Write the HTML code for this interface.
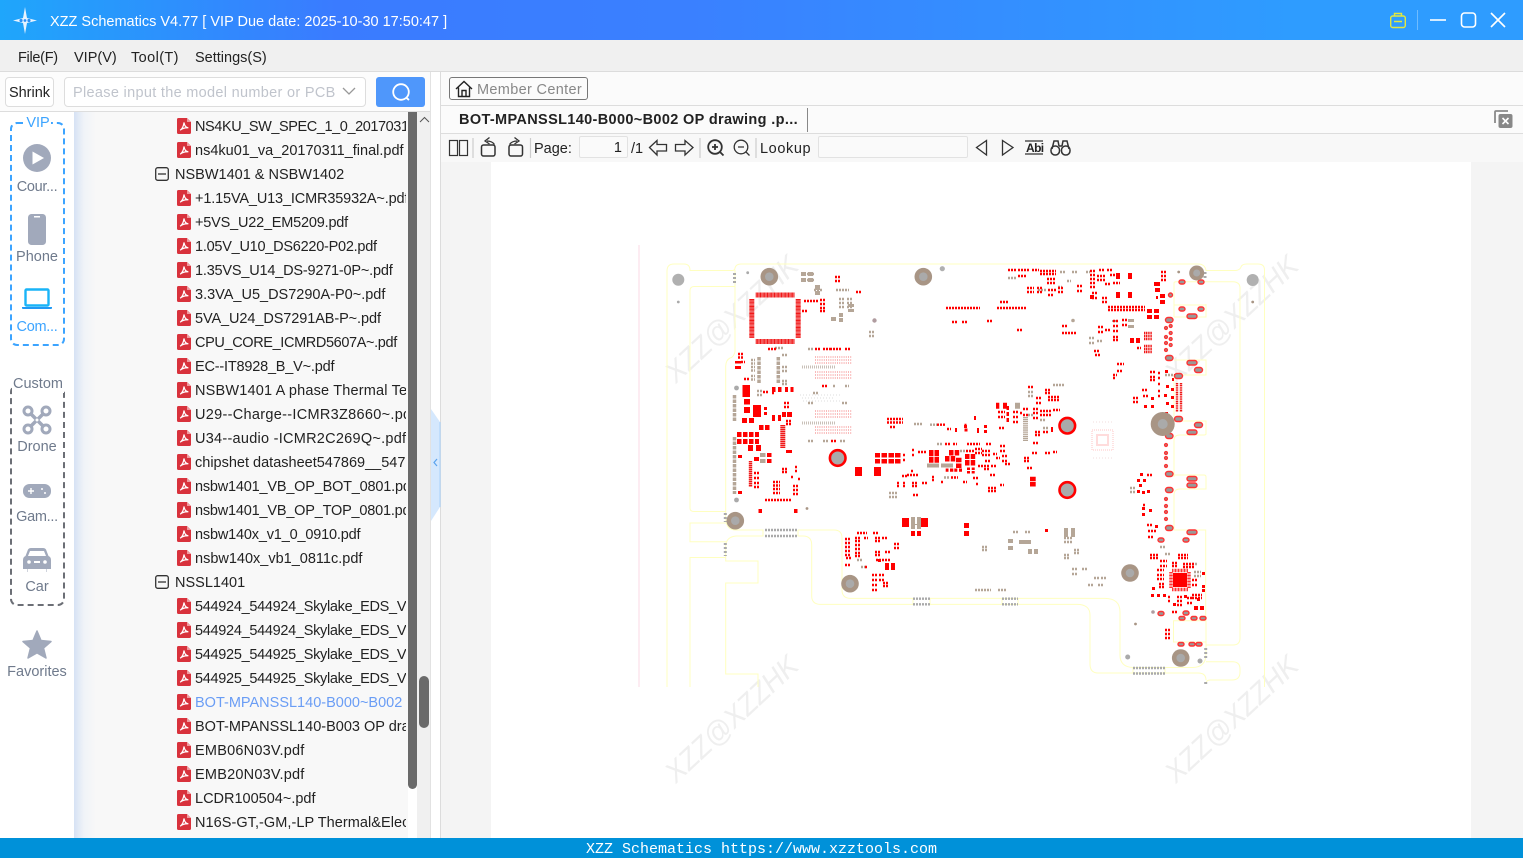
<!DOCTYPE html>
<html><head><meta charset="utf-8"><title>XZZ Schematics</title>
<style>
*{box-sizing:border-box}
html,body{margin:0;padding:0;width:1523px;height:858px;overflow:hidden;background:#fff;font-family:"Liberation Sans","Noto Sans CJK SC",sans-serif;color:#222}
.a{position:absolute;white-space:nowrap}
#title{left:0;top:0;width:1523px;height:40px;background:linear-gradient(90deg,#1fa6fb 0,#3a7bff 22%,#3a80ff 45%,#2e9cff 85%)}
#menu{left:0;top:40px;width:1523px;height:32px;background:#f0f0f0;border-bottom:1px solid #dcdcdc}
.m{top:49px;font-size:14.5px;line-height:18px;color:#222}
.n{left:0;width:74px;text-align:center;font-size:14.5px;line-height:18px;color:#6f7a8c;margin-top:1px}
#tree{left:74px;top:112px;width:334px;height:726px;background:linear-gradient(90deg,#d6e2f4 0,#f0f3f8 10px,#f8f8f8 22px);overflow:hidden}
.t{left:121px;width:211px;height:24px;line-height:24px;font-size:14.5px;color:#222;overflow:hidden;margin-top:1px}
svg{position:absolute;overflow:visible}
.s{stroke:#333;stroke-width:1.3;fill:none}
</style></head><body>
<svg width="0" height="0" style="position:absolute"><defs>
<g id="pdf"><path d="M0 1.5Q0 0 1.5 0H10L14 4V14.5Q14 16 12.5 16H1.5Q0 16 0 14.5Z" fill="#d8323c"/><path d="M10 0V4H14Z" fill="#f09a9f"/><path d="M3.2 12.2C5 11 6.5 8.5 7 4.5 7.5 8 9 9.6 11.4 9.8 8.5 9.6 5.5 10.2 3.2 12.2Z" fill="none" stroke="#fff" stroke-width="1.2"/></g>
</defs></svg>

<div class="a" id="title"></div>
<svg style="left:12px;top:7px" width="26" height="27" viewBox="0 0 26 27"><path d="M13 0L15 11 25 13.5 15 16 13 27 11 16 1 13.5 11 11Z" fill="#e7f3ff"/><circle cx="9" cy="13.5" r="1.6" fill="#2c90f6"/><circle cx="17" cy="13.5" r="1.6" fill="#2c90f6"/><circle cx="13" cy="13.5" r="1.4" fill="#2c90f6"/></svg>
<div class="a" style="left:50px;top:12px;font-size:14.5px;line-height:20px;color:#fff">XZZ Schematics V4.77 [ VIP Due date: 2025-10-30 17:50:47 ]</div>
<svg style="left:1390px;top:12px" width="16" height="17" viewBox="0 0 16 17" fill="none" stroke="#e2e83f" stroke-width="1.4"><rect x=".7" y="4" width="14.6" height="11.5" rx="2"/><path d="M4.5 4V1.5H11.500V4M4 9.500H12"/></svg>
<div class="a" style="left:1417px;top:10px;width:1px;height:20px;background:#6fbcff"></div>
<svg style="left:1428px;top:10px" width="80" height="20" viewBox="0 0 80 20" fill="none" stroke="#fff" stroke-width="1.6"><path d="M2 10H18"/><rect x="33.500" y="3" width="14" height="14" rx="3"/><path d="M63 3L77 17M77 3L63 17"/></svg>

<div class="a" id="menu"></div>
<div class="a m" style="left:18px;letter-spacing:-.3px">File(F)</div>
<div class="a m" style="left:74px">VIP(V)</div>
<div class="a m" style="left:131px;letter-spacing:.4px">Tool(T)</div>
<div class="a m" style="left:195px">Settings(S)</div>

<div class="a" style="left:0;top:72px;width:430px;height:40px;background:#fcfcfc;border-bottom:1px solid #ddd"></div>
<div class="a" style="left:5px;top:77px;width:49px;height:30px;border:1px solid #ddd;border-radius:4px;background:#fff;font-size:14.5px;line-height:30px;text-align:center;color:#222">Shrink</div>
<div class="a" style="left:64px;top:77px;width:302px;height:30px;border:1px solid #ddd;border-radius:4px;background:#fff;font-size:14.5px;line-height:30px;padding-left:8px;color:#c0c4cc;letter-spacing:.31px">Please input the model number or PCB</div>
<svg style="left:342px;top:87px" width="14" height="9" viewBox="0 0 14 9" fill="none" stroke="#999" stroke-width="1.3"><path d="M1 1L7 7 13 1"/></svg>
<div class="a" style="left:376px;top:77px;width:49px;height:30px;border-radius:3px;background:#4f97fb"></div>
<svg style="left:391px;top:82px" width="20" height="20" viewBox="0 0 20 20" fill="none" stroke="#fff" stroke-width="1.8"><circle cx="10" cy="10" r="7.800"/><path d="M15 15.500L18 18"/></svg>

<!-- left nav -->
<div class="a" style="left:0;top:112px;width:74px;height:726px;background:#fff"></div>
<div class="a" style="left:9.500px;top:122px;width:55px;height:224px;border:2px dashed #3ca4ff;border-radius:7px"></div>
<div class="a" style="left:25px;top:114px;width:26px;height:18px;background:#fff;color:#3ca4ff;font-size:14.5px;line-height:18px;text-align:center">VIP</div>
<svg style="left:23px;top:144px" width="28" height="28" viewBox="0 0 28 28"><circle cx="14" cy="14" r="14" fill="#a1a9bb"/><path d="M9.500 7.500L21 14 9.500 20.500Z" fill="#fff"/></svg>
<div class="a n" style="top:177px;letter-spacing:-.3px">Cour...</div>
<svg style="left:28px;top:214px" width="18" height="31" viewBox="0 0 18 31"><rect width="18" height="31" rx="3.500" fill="#a1a9bb"/><rect x="6" y="2" width="6" height="1.500" fill="#fff"/></svg>
<div class="a n" style="top:247px">Phone</div>
<svg style="left:22px;top:288px" width="30" height="22" viewBox="0 0 30 22" fill="none"><rect x="3.500" y="1.500" width="23" height="16" rx="1" stroke="#19b4f7" stroke-width="2.400"/><path d="M0 19H30V20Q30 21 29 21H1Q0 21 0 20Z" fill="#2099f5"/></svg>
<div class="a n" style="top:317px;color:#3ca4ff;letter-spacing:-.3px">Com...</div>

<div class="a" style="left:9.500px;top:385px;width:55px;height:221px;border:2px dashed #6c6f76;border-radius:7px"></div>
<div class="a" style="left:12px;top:375px;width:52px;height:18px;background:#fff;color:#6f7a8c;font-size:14.5px;line-height:18px;text-align:center">Custom</div>
<svg style="left:22px;top:405px" width="30" height="30" viewBox="0 0 30 30" fill="none" stroke="#a1a9bb"><g stroke-width="3"><circle cx="6" cy="6" r="4"/><circle cx="24" cy="6" r="4"/><circle cx="6" cy="24" r="4"/><circle cx="24" cy="24" r="4"/></g><path d="M8 8L22 22M22 8L8 22" stroke-width="3.500"/><circle cx="15" cy="15" r="2" fill="#fff" stroke-width="1"/></svg>
<div class="a n" style="top:437px">Drone</div>
<svg style="left:23px;top:484px" width="28" height="14" viewBox="0 0 28 14"><rect width="28" height="14" rx="6.500" fill="#a1a9bb"/><path d="M5 7H11M8 4V10" stroke="#fff" stroke-width="1.400"/><circle cx="19" cy="5" r="1" fill="#fff"/><circle cx="22" cy="9" r="1" fill="#fff"/></svg>
<div class="a n" style="top:507px;letter-spacing:-.3px">Gam...</div>
<svg style="left:23px;top:548px" width="28" height="24" viewBox="0 0 28 24"><path d="M5 1.500Q6 0 8 0H20Q22 0 23 1.500L25.500 8Q28 9 28 12V21H23.500V24H4.500V21H0V12Q0 9 2.500 8Z" fill="#a1a9bb" /><path d="M7 3H21L23 8H5Z" fill="#fff"/><circle cx="6" cy="14" r="1.800" fill="#fff"/><circle cx="22" cy="14" r="1.800" fill="#fff"/><rect x="11" y="13" width="6" height="2" fill="#fff"/><rect x="5" y="21" width="18" height="3" fill="#fff"/></svg>
<div class="a n" style="top:577px">Car</div>
<svg style="left:22px;top:630px" width="30" height="29" viewBox="0 0 30 29"><path d="M15 1L19 10.500 29 11.500 21.500 18 24 28 15 22.800 6 28 8.500 18 1 11.500 11 10.500Z" fill="#a1a9bb" stroke="#a1a9bb" stroke-width="1.500" stroke-linejoin="round"/></svg>
<div class="a n" style="top:662px">Favorites</div>

<!-- tree -->
<div class="a" id="tree">
<svg style="left:103px;top:6px" width="14" height="16"><use href="#pdf"/></svg><div class="a t" style="top:2px;letter-spacing:-.42px">NS4KU_SW_SPEC_1_0_20170317</div>
<svg style="left:103px;top:30px" width="14" height="16"><use href="#pdf"/></svg><div class="a t" style="top:26px">ns4ku01_va_20170311_final.pdf</div>
<svg style="left:81px;top:55px" width="14" height="14"><rect class="s" x=".7" y=".7" width="12.600" height="12.600" rx="2"/><path class="s" d="M3 7H11"/></svg><div class="a t" style="top:50px;left:101px;width:230px">NSBW1401 &amp; NSBW1402</div>
<svg style="left:103px;top:78px" width="14" height="16"><use href="#pdf"/></svg><div class="a t" style="top:74px;letter-spacing:-.15px">+1.15VA_U13_ICMR35932A~.pdf</div>
<svg style="left:103px;top:102px" width="14" height="16"><use href="#pdf"/></svg><div class="a t" style="top:98px;letter-spacing:-.2px">+5VS_U22_EM5209.pdf</div>
<svg style="left:103px;top:126px" width="14" height="16"><use href="#pdf"/></svg><div class="a t" style="top:122px;letter-spacing:-.25px">1.05V_U10_DS6220-P02.pdf</div>
<svg style="left:103px;top:150px" width="14" height="16"><use href="#pdf"/></svg><div class="a t" style="top:146px;letter-spacing:-.2px">1.35VS_U14_DS-9271-0P~.pdf</div>
<svg style="left:103px;top:174px" width="14" height="16"><use href="#pdf"/></svg><div class="a t" style="top:170px">3.3VA_U5_DS7290A-P0~.pdf</div>
<svg style="left:103px;top:198px" width="14" height="16"><use href="#pdf"/></svg><div class="a t" style="top:194px;letter-spacing:-.09px">5VA_U24_DS7291AB-P~.pdf</div>
<svg style="left:103px;top:222px" width="14" height="16"><use href="#pdf"/></svg><div class="a t" style="top:218px;letter-spacing:-.37px">CPU_CORE_ICMRD5607A~.pdf</div>
<svg style="left:103px;top:246px" width="14" height="16"><use href="#pdf"/></svg><div class="a t" style="top:242px;letter-spacing:-.2px">EC--IT8928_B_V~.pdf</div>
<svg style="left:103px;top:270px" width="14" height="16"><use href="#pdf"/></svg><div class="a t" style="top:266px;letter-spacing:.18px">NSBW1401 A phase Thermal Test</div>
<svg style="left:103px;top:294px" width="14" height="16"><use href="#pdf"/></svg><div class="a t" style="top:290px;letter-spacing:.3px">U29--Charge--ICMR3Z8660~.pdf</div>
<svg style="left:103px;top:318px" width="14" height="16"><use href="#pdf"/></svg><div class="a t" style="top:314px;letter-spacing:.26px">U34--audio -ICMR2C269Q~.pdf</div>
<svg style="left:103px;top:342px" width="14" height="16"><use href="#pdf"/></svg><div class="a t" style="top:338px">chipshet datasheet547869__547</div>
<svg style="left:103px;top:366px" width="14" height="16"><use href="#pdf"/></svg><div class="a t" style="top:362px;letter-spacing:-.2px">nsbw1401_VB_OP_BOT_0801.pdf</div>
<svg style="left:103px;top:390px" width="14" height="16"><use href="#pdf"/></svg><div class="a t" style="top:386px;letter-spacing:-.2px">nsbw1401_VB_OP_TOP_0801.pdf</div>
<svg style="left:103px;top:414px" width="14" height="16"><use href="#pdf"/></svg><div class="a t" style="top:410px;letter-spacing:-.18px">nsbw140x_v1_0_0910.pdf</div>
<svg style="left:103px;top:438px" width="14" height="16"><use href="#pdf"/></svg><div class="a t" style="top:434px">nsbw140x_vb1_0811c.pdf</div>
<svg style="left:81px;top:463px" width="14" height="14"><rect class="s" x=".7" y=".7" width="12.600" height="12.600" rx="2"/><path class="s" d="M3 7H11"/></svg><div class="a t" style="top:458px;left:101px;width:230px">NSSL1401</div>
<svg style="left:103px;top:486px" width="14" height="16"><use href="#pdf"/></svg><div class="a t" style="top:482px;letter-spacing:-.3px">544924_544924_Skylake_EDS_Vol</div>
<svg style="left:103px;top:510px" width="14" height="16"><use href="#pdf"/></svg><div class="a t" style="top:506px;letter-spacing:-.3px">544924_544924_Skylake_EDS_Vol</div>
<svg style="left:103px;top:534px" width="14" height="16"><use href="#pdf"/></svg><div class="a t" style="top:530px;letter-spacing:-.3px">544925_544925_Skylake_EDS_Vol</div>
<svg style="left:103px;top:558px" width="14" height="16"><use href="#pdf"/></svg><div class="a t" style="top:554px;letter-spacing:-.3px">544925_544925_Skylake_EDS_Vol</div>
<svg style="left:103px;top:582px" width="14" height="16"><use href="#pdf"/></svg><div class="a t" style="top:578px;color:#6a9df5">BOT-MPANSSL140-B000~B002</div>
<svg style="left:103px;top:606px" width="14" height="16"><use href="#pdf"/></svg><div class="a t" style="top:602px">BOT-MPANSSL140-B003 OP drawing</div>
<svg style="left:103px;top:630px" width="14" height="16"><use href="#pdf"/></svg><div class="a t" style="top:626px;letter-spacing:.22px">EMB06N03V.pdf</div>
<svg style="left:103px;top:654px" width="14" height="16"><use href="#pdf"/></svg><div class="a t" style="top:650px;letter-spacing:.22px">EMB20N03V.pdf</div>
<svg style="left:103px;top:678px" width="14" height="16"><use href="#pdf"/></svg><div class="a t" style="top:674px">LCDR100504~.pdf</div>
<svg style="left:103px;top:702px" width="14" height="16"><use href="#pdf"/></svg><div class="a t" style="top:698px;letter-spacing:.05px">N16S-GT,-GM,-LP Thermal&amp;Electrical</div>
</div>
<div class="a" style="left:408px;top:112px;width:9px;height:677px;background:#6a6a6a;border-radius:0 0 5px 5px"></div>
<div class="a" style="left:417px;top:112px;width:13px;height:726px;background:#f0f0f0"></div>
<div class="a" style="left:419px;top:676px;width:10px;height:52px;background:#6a6a6a;border-radius:5px"></div>
<svg style="left:419px;top:116px" width="11" height="8" viewBox="0 0 11 8" fill="none" stroke="#555" stroke-width="1"><path d="M1 6L5.500 1.500 10 6"/></svg>
<div class="a" style="left:430px;top:72px;width:1px;height:766px;background:#e2e2e2"></div>
<div class="a" style="left:440px;top:72px;width:1px;height:766px;background:#dcdcdc"></div>
<svg style="left:431px;top:409px" width="10" height="113" viewBox="0 0 10 113"><path d="M0 0L9 13V98L0 112Z" fill="#d5e8fd"/><path d="M9 13V98" stroke="#a9d2fb" stroke-width="1" fill="none"/><path d="M6 50L3 53.500 6 57" stroke="#5ba3ee" stroke-width="1.200" fill="none"/></svg>

<!-- right head -->
<div class="a" style="left:441px;top:72px;width:1082px;height:34px;background:#fbfbfb;border-bottom:1px solid #ddd"></div>
<div class="a" style="left:441px;top:106px;width:1082px;height:28px;background:#fbfbfb;border-bottom:1px solid #ddd"></div>
<div class="a" style="left:441px;top:134px;width:1082px;height:28px;background:#f8f8f8"></div>
<div class="a" style="left:449px;top:77px;width:139px;height:23px;border:1px solid #777;border-radius:3px;background:#fbfbfb"></div>
<svg style="left:455px;top:80px" width="18" height="18" viewBox="0 0 18 18" fill="none" stroke="#222" stroke-width="1.400"><path d="M1 9L9 1.500 17 9M3.500 7.500V16.500H14.500V7.500M7 16.500V10.500H11V16.500"/></svg>
<div class="a" style="left:477px;top:81px;font-size:14.500px;line-height:19px;color:#888;letter-spacing:.33px">Member Center</div>
<div class="a" style="left:459px;top:111px;font-size:14.500px;line-height:19px;font-weight:700;color:#222;letter-spacing:.35px">BOT-MPANSSL140-B000~B002 OP drawing .p...</div>
<div class="a" style="left:807px;top:108px;width:1px;height:24px;background:#888"></div>
<svg style="left:1494px;top:110px" width="19" height="18" viewBox="0 0 19 18"><path d="M14 1H2Q1 1 1 2V13" fill="none" stroke="#8a8a8a" stroke-width="1.800"/><rect x="4.500" y="4" width="14" height="14" rx="2" fill="#888"/><path d="M8.500 8L14.500 14M14.500 8L8.500 14" stroke="#fff" stroke-width="1.600"/></svg>
<!-- toolbar -->
<svg style="left:441px;top:134px" width="640" height="28" viewBox="441 134 640 28" fill="none" stroke="#333" stroke-width="1.200">
<rect x="449.500" y="140.500" width="8" height="15"/><rect x="459.500" y="140.500" width="8" height="15"/>
<path d="M473 138V158M530.500 138V158M700 138V158M756 138V158" stroke="#ccc"/>
<rect x="481.500" y="145" width="13.500" height="11" rx="2" stroke-width="1.500"/><path d="M494.500 144.500Q492 141 487 141M489.500 137.500L485 141 489.500 144" stroke-width="1.300"/>
<rect x="509" y="145" width="13.500" height="11" rx="2" stroke-width="1.500"/><path d="M509.500 144.500Q512 141 517 141M514.500 137.500L519 141 514.500 144" stroke-width="1.300"/>
<path d="M649.500 147.500L657 140.500V144.500H666.500V151H657V155Z" stroke-width="1.300"/>
<path d="M693 147.500L685 140.500V144.500H675.500V151H685V155Z" stroke-width="1.300"/>
<circle cx="715" cy="147" r="6.800" stroke-width="1.800"/><path d="M712 147H718M715 144V150M720 152L723.500 155.500" stroke-width="1.800"/>
<circle cx="741" cy="147" r="6.800" stroke-width="1.300"/><path d="M738 147H744M746 152L749.500 155.500" stroke-width="1.300"/>
<path d="M986.500 140.500L976.500 147.500 986.500 155Z" stroke-width="1.300"/>
<path d="M1002.500 140.500L1013 147.500 1002.500 155Z" stroke-width="1.300"/>
<path d="M1025 141H1043M1025 154H1043"/>
<g stroke-width="1.500"><rect x="1051" y="146" width="8.500" height="9" rx="4"/><rect x="1061.500" y="146" width="8.500" height="9" rx="4"/><path d="M1052 149L1054 141H1058L1059 146M1062 146L1063 141H1067L1069 149M1059 146H1062"/></g>
</svg>
<div class="a" style="left:1026px;top:141px;font-size:12px;line-height:14px;font-weight:700;letter-spacing:-.6px;color:#222">Abi</div>
<div class="a" style="left:534px;top:140px;font-size:14.500px;line-height:19px;color:#222">Page:</div>
<div class="a" style="left:579px;top:136px;width:49px;height:22px;border:1px solid #e2e2e2;border-radius:2px;background:#fafafa;font-size:14.500px;line-height:23px;text-align:right;padding-right:5px;color:#222">1</div>
<div class="a" style="left:631px;top:140px;font-size:14.500px;line-height:19px;color:#222">/1</div>
<div class="a" style="left:760px;top:140px;font-size:14.500px;line-height:19px;color:#222;letter-spacing:.6px">Lookup</div>
<div class="a" style="left:818px;top:136px;width:150px;height:22px;border:1px solid #e2e2e2;border-radius:2px;background:#fafafa"></div>

<!-- page -->
<div class="a" style="left:441px;top:162px;width:1082px;height:676px;background:#f4f4f4"></div>
<div class="a" style="left:491px;top:162px;width:980px;height:676px;background:#fff"></div>

<svg style="left:0;top:0" width="1523" height="858" viewBox="0 0 1523 858" fill="none">
<g fill="#efefef" font-family="Liberation Sans,sans-serif" font-size="29" font-style="italic">
<text textLength="170" lengthAdjust="spacingAndGlyphs" transform="translate(676 384) rotate(-43)">XZZ@XZZHK</text>
<text textLength="170" lengthAdjust="spacingAndGlyphs" transform="translate(1176 384) rotate(-43)">XZZ@XZZHK</text>
<text textLength="170" lengthAdjust="spacingAndGlyphs" transform="translate(676 784) rotate(-43)">XZZ@XZZHK</text>
<text textLength="170" lengthAdjust="spacingAndGlyphs" transform="translate(1176 784) rotate(-43)">XZZ@XZZHK</text>
</g>
<path d="M639 245V687" stroke="#fbd8e4" stroke-width="1"/>
<g stroke="#ffffc0" stroke-width="1">
<path d="M667 687V271Q667 264 674 264H684Q690 264 690 270.500H733Q735 270 735 268Q736 264 741 264H1198Q1205 264 1206 270.500H1236Q1240 270 1241 267Q1242 264 1247 264H1258Q1264.500 264 1264.500 270V687"/>
<path d="M735 270V352Q733 358 730 358 726 360 725.700 366V520Q727 530 736 530H763V536H736Q726 537 725.700 546V561H758V583H725.700V674H758V687"/>
<path d="M735 286.500H694Q690 286.500 690 291V508Q690 511.500 694 511.500H726M726 523H690V541.700H726M726 557.500H690V687"/>
<path d="M798 536H803Q811.700 536 811.700 545V596Q811.700 604 820 604.400H913M930 604.400H1076Q1090 604 1090 615V664Q1090 673 1098 673H1198Q1206 673 1206 680"/>
<path d="M798 530H834Q842 530 842 538V590Q842 598 850 598.400H913M930 598.400H1104Q1120 598 1120 612V655Q1120 667 1133 667.500H1193Q1206 667 1206 654V620.700H1173.500V642H1206"/>
<path d="M798 530V536M763 530V536M913 598V604M930 598V604M1002 598V604M1018 598V604M1133 667V673M1165 667V673"/>
<path d="M1174 317V283Q1174 281.700 1176 281.700H1233Q1240 282 1240 288V638Q1240 645 1233 645H1206"/>
<path d="M1206 661.700H1233Q1240 662 1240 669V672Q1240 680 1232 680H1210Q1206 680 1206 684"/>
<path d="M1174 317H1206V304M1174 305H1206M1174 360H1206V375H1174V417M1174 421H1206V434Q1206 435 1204 435H1180Q1174 435 1174 440V477M1174 475H1204Q1206 475 1206 477V489H1180Q1174 489 1174 495V530H1205.700V620"/>
</g>
<!-- faint blob -->
<rect x="1092" y="430" width="21" height="20" stroke="#ffe2e2" stroke-width="2" stroke-dasharray="1 1"/>
<path d="M1097 435H1108V445H1097Z" stroke="#ffdcdc" stroke-width="2"/>
<path d="M1093 422H1112M1093 458H1112" stroke="#f2dede" stroke-width="1" stroke-dasharray="1 2"/>
<!-- pale pink fields -->
<path d="M815 357H852M815 360H852M815 363H852M815 372H852M815 375H852M815 378H852M815 411H852M815 414H852M815 417H852M815 427H852M815 430H852M815 433H852" stroke="#f7a3a3" stroke-width="1.500" stroke-dasharray="1 1.200"/>
<path d="M802 367H835M802 423H835" stroke="#c9c0b8" stroke-width="3" stroke-dasharray="1 1"/>
<path d="M800 395H842M802 398H835M803 401H840" stroke="#ddd" stroke-width="1" stroke-dasharray="1 2"/>
<!-- QFP -->
<path d="M755.700 295H794.500M755.700 341.500H794.500M751.800 299V338M798.200 299V338" stroke="#f01818" stroke-width="5" stroke-dasharray="1.100 .3"/>
<!-- brown rows -->
<path stroke="#b5a697" stroke-width="2.400" stroke-dasharray="2 1" d="M801 274h13M801 280h13M814 290h8M836 290h13M839 299h6M839 303h6M839 307h6M847 299h6M847 303h6M847 307h6M808 349h5M813 393h6M833 386h3M845 386h4M808 403h5M842 403h5M808 441h6M823 441h6M840 441h6M869 332h6M869 336h6M775 348h8M1008 278h9M1060 272h5M1038 290h8M1067 281h4M1072 272h6M1086 272h4M1058 287h4M1089 338h5M1089 343h5M1097 341h5M1043 428h5M1040 420h5M914 424h8M930 424.700h8M937 444h6M944 477.500h5M960 451h5M929 426h0M1028 387h0M1028 392h5M1028 396h5M1064 538h9M1064 542h9M1074 550h6M1074 553h6M1064 555h6M1064 558h6M1072 569h6M1072 574h6M1082 569h5M1088 585h6M1094 578h6M1098 585h5M1101 578h5M975 590h16M998 590h9M982 547h5M982 550h5M1013 532h5M1025 532h5M1165 554h5M1160 547h5M1165 375h8M889 493h8M889 497h8M857 560h6M751 360h4M751 363.500h4M751 367h4M751 370.500h4M751 376h4M751 379.500h4M782 355h5M782 367h5M782 371h5M782 381h5M782 384h5M757 391h6M757 395h6M861 567h5M1130 488h5M1130 492h5M1192 564h5M1194 572h7M1194 576h7M1053 385h12M1028 415h5M1015 412h0M1043 420h0"/>
<path stroke="#b5a697" stroke-width="3.500" stroke-dasharray="3.500 1" d="M759 357V384M778.300 357V384M734.500 395V422M734.500 437V494"/>
<path stroke="#aaa" stroke-width="2.400" stroke-dasharray="2 1" d="M765 530h32M765 536h32M913 598.700h17M913 604.300h17M1002 598.700h16M1002 604.300h16M1133 668h32M1133 673.500h32"/>
<path stroke="#aaa" stroke-width="3" stroke-dasharray="2 2" d="M725.300 513V522M725.300 543V556M734.500 273V285M1205.700 648V658M1205.700 682V686M1205 272V278"/>
<path stroke="#b5a697" stroke-width="5" stroke-dasharray="1.200 .7" d="M1025.500 417V441"/>
<!-- brown blocks -->
<path fill="#b5a697" d="M801 272h5v4h-5zM808 272h5v4h-5zM801 278h5v4h-5zM808 278h5v4h-5zM815 285h5v5h-5zM815 291h5v4h-5zM848 304h6v3h-6zM848 309h6v3h-6zM831 317h5v4h-5zM839 313h4v4h-4zM839 318h4v4h-4zM760 453h5.500v4h-5.500zM760 459h5.500v4h-5.500zM911 517h4v12h-4zM917 517h4v12h-4zM911 524h10v1h-10zM927 463.500h12v4h-12zM941 463.500h12v4h-12zM1019 540h12v4h-12zM1008 539h5v4h-5zM1008 546h5v4h-5zM1028 549h4v5h-4zM1034 549h4v5h-4zM1064 528h4v9h-4zM1071 528h4v9h-4zM1112 320h6v2h-6zM1128 319h6v3h-6zM1128 325h6v3h-6zM1015 402.700h5v6h-5z"/>
<!-- red rows -->
<path stroke="#f00" stroke-width="2.400" stroke-dasharray="2 1" d="M768 349h8M804 301h14M820 300h5M820 304h5M820 308h5M820 311h5M802 311h5M835 281h5M835 277h5M856 292h5M815 349h6M823 349h8M830 349h12M845 349h5M822 386h5M831 441h6M738 354h5M738 357.500h5M744 379h5M763 392h5M732 367h0M741 362h4M745 377h0M784 403h5M784 407h5M772 393h3M786 421h5M786 424h5M767 406h0M767 411h0M754 473h5M754 478h5M754 483h5M754 487h5M773 482h7M773 485.500h7M773 489h7M773 493h7M782 469h5M782 472h5M793 486h5M793 490h5M793 494h5M795 467h3M795 471h3M791 477h3M798 479h3M765 500h27M887 419h16M887 422.500h16M890 427h5M937 424.700h9M947 429h4M964.500 425h2M985 427h0M999 428h5M998 412h7M998 417h7M1013 412h6M1013 417h6M1013 422h6M1020 413h3M1023 409h5M1023 415h5M1033 409h5M1033 413h5M1033 418h5M1040 411h12M1040 415h12M1053 410h7M1048 397h12M1048 400h12M1045 390h5M1045 393h5M1028 387h5M1036 403h5M1036 398h5M1035 432h5M1035 435h5M1033 443h5M1043 432h5M1032 453h5M1045 453h5M1053 452h4M1024 458h5M1024 461h5M1027 468h5M1000 446h5M1000 451h5M1002 456h5M1002 461h5M996 458h4M1005 464h5M993 454h4M967 444h13M986 444h5M966 451h8M975 449h7M975 453h7M982 451h8M982 455h8M985 461h5M978 466h5M984 466h5M984 469h5M991 466h5M990 475h5M973 478h5M1000 485h4M988 488h9M988 491h9M976 484h2M963 482h4M945 444h5M953 444h4M951 477.500h7M918 452h8M912 450h3M912 455h3M917 457h0M903 455h3M903 460h3M907 475h11M911 471h3M902 476h5M897 483h3M897 486h3M903 483h3M903 486h3M912 483h6M912 486h6M922 483h5M902 490h0M913 495h5M919 474h0M932 477h3M932 480h3M941 482h3M1033 411h0M1000 474h0M1090 271h5M1090 275h5M1090 279h5M1090 283h5M1090 287h5M1099 270h5M1107 270h5M1097 276h8M1097 280h8M1113 283h7M1110 275h8M1105 284h5M1092 293h6M1092 298h6M1102 298h6M1102 302h6M1108 307h37M1108 310h37M1113 321h5M1113 326h5M1113 331h5M1113 337h5M1113 340h5M1122 320h5M1122 325h5M1098 327h5M1098 332h5M1105 330h6M1137 348h4M1094 351h6M1095 355h5M1117 364h7M1113 375h4M1117 371h5M1113 378h3M1133 398h5M1133 402h5M1142 390h5M1143 396h6M1150 372h5M1150 377h5M1150 380h5M1158 373h3M1158 378h3M1158 384h3M1158 391h3M1158 396h3M1161 272h6M1161 276h6M1161 280h6M1018 276h9M1008 270h8M1018 270h12M1032 270h7M1040 271h16M1040 274h16M1047 279h8M1047 283h8M1048 290h8M1048 295h6M1027 288h7M1027 292h7M1037 288h5M1037 292h5M1058 288h5M1058 292h5M1077 286h5M1077 291h5M1062 326h5M1062 333h15M997 308h30M1000 302h8M987 321h5M1017 330h5M946 308h34M952 322h5M962 322h5M845 539h5M845 543h5M845 547h5M845 551h5M845 555h5M846 558h5M845 565h5M855 538h5M855 541h5M855 545h5M855 549h5M855 553h5M855 556h5M857 533h10M864 538h4M873 533h6M875 538h5M875 541h5M882 538h6M875 552h5M875 555h5M876 560h14M894 544h5M894 548h5M885 552h5M872 575h6M872 580h6M872 585h6M872 590h6M879 575h5M879 580h5M883 583h5M883 586h5M865 567h3M1147 475h5M1143 505h3M1147 525h5M1148 531h9M1148 537h5M1150 555h8M1150 558h8M1160 561h7M1160 566h7M1157 570h7M1157 575h7M1157 579h7M1159 584h5M1159 587h5M1178 555h10M1178 558h10M1172 563h5M1172 566h5M1183 564h11M1183 567h11M1192 580h6M1192 585h6M1192 595h10M1192 598h10M1177 597h6M1177 601h6M1187 598h5M1187 603h5M1177 605h5M1165 630h5M1165 634h5M1165 638h5M1168 597h3M1168 601h3M1172 612h5M1047 429h0M1030 410h0"/>
<!-- fine red column -->
<path stroke="#f01818" stroke-width="2.400" stroke-dasharray="1.200 .6" d="M1177 383V412M1181 383V412M1144 336h8M1144 349h8M1144 333h8M1144 339h8M1144 346h8M1144 352h8"/>
<path stroke="#f01818" stroke-width="5" stroke-dasharray="1.500 .5" d="M782.800 425V448"/>
<path stroke="#f01818" stroke-width="3.400" stroke-dasharray="1.500 .5" d="M750.500 461V487"/>
<!-- red solid blocks -->
<path fill="#f00" d="M772 387h3.500v5h-3.500zM778 387h3.500v5h-3.500zM785 387h3v5h-3zM790.500 387h3v5h-3zM742.500 385h7.500v12h-7.500zM744 399h6v5.500h-6zM753 405h8v12h-8zM744 407h6v6h-6zM742 418h5v5h-5zM749 418h5v5h-5zM759 425h4.500v5h-4.500zM765 425h4.500v5h-4.500zM737 432h4.500v5h-4.500zM743 432h4.500v5h-4.500zM749 432h4.500v5h-4.500zM755 432h4v5h-4zM737 439h4.500v5h-4.500zM743 439h4.500v5h-4.500zM749 439h4.500v5h-4.500zM755 439h4v5h-4zM748 445h5v6h-5zM756 445h5v6h-5zM782 412h4v5h-4zM787 412h5v5h-5zM772 415h3v6h-3zM778 415h3v6h-3zM786 450h6v3h-6zM754 457h5v4h-5zM767 453h4.500v4h-4.500zM767 459h4.500v4h-4.500zM738 455h4v3h-4zM738 491h4v3h-4zM735 361h6v2.500h-6zM735 366h6v3h-6zM764 407h3v3h-3zM764 412h3v3h-3zM760 447h0M875 453h5v4.500h-5zM881.500 453h5.500v4.500h-5.500zM888.500 453h5.500v4.500h-5.500zM895 453h5.500v4.500h-5.500zM875 459h5v4.500h-5zM881.500 459h5.500v4.500h-5.500zM888.500 459h5.500v4.500h-5.500zM895 459h5.500v4.500h-5.500zM929 450h4.500v6h-4.500zM934.500 450h4.500v6h-4.500zM929 456.700h4.500v6h-4.500zM934.500 456.700h4.500v6h-4.500zM949 450h4.500v5.500h-4.500zM954.700 450h4.500v5.500h-4.500zM945 456h4.500v5.500h-4.500zM950.700 456h4.500v5.500h-4.500zM956 457.700h5.500v4.500h-5.500zM956 463.500h5.500v4.500h-5.500zM945.700 468.500h2.800v3.300h-2.800zM950 468.500h3.300v3.300h-3.300zM954.300 468.500h3v3.300h-3zM959 468.500h3v3.300h-3zM965 454h4.500v5h-4.500zM970.700 454h4.500v5h-4.500zM965 460h4.500v5.500h-4.500zM970.700 460h4.500v5.500h-4.500zM967 467.500h3v2.500h-3zM967 471h3v2.500h-3zM971.700 467.500h3v2.500h-3zM971.700 471h3v2.500h-3zM996 402.700h3.300v6h-3.300zM1003 402.700h4v6h-4zM1030 476.700h5.700v4.500h-5.700zM1030 482h5.700v4.500h-5.700zM855 467h7v9h-7zM874 467h7v9h-7zM758.500 509h3.500v4h-3.500zM794 509h3.500v4h-3.500zM902 518h7v9h-7zM921 518h7v9h-7zM911 531h4v5h-4zM917 531h4v5h-4zM964 523h5v5h-5zM964 531h5v5h-5zM885 563h4v7h-4zM891 563h4v7h-4zM878 559h3v3h-3zM964 425h3v3h-3zM964.500 428.500h3v3h-3zM984 425h3v3h-3zM984 430h3v3h-3zM955 428h2v4h-2zM1006.500 406h2.500v4h-2.500zM1006.500 412h2.500v4h-2.500zM1006.500 418h2.500v4h-2.500zM977 428h2v5h-2zM974 416h2v4h-2zM1051 427h2v5h-2zM1090 295h4v4h-4zM1116 273h4v6h-4zM1128 273h4v6h-4zM1116 292h4v6h-4zM1128 292h4v6h-4zM1154 282h6v4h-6zM1155 288h5v4h-5zM1160 294h5v4h-5zM1160 300h5v4h-5zM1156 296h2v3h-2zM1147 309h5v4h-5zM1154 309h5v4h-5zM1147 315h5v4h-5zM1154 315h5v4h-5zM1130 338h4v5h-4zM1136 338h4v5h-4zM1045 529h3v3h-3zM1173 573h14v14h-14z"/>
<path d="M1172 570.500H1188M1172 589.500H1188M1171 572V588M1189 572V588" stroke="#f33" stroke-width="3.500" stroke-dasharray="1 .5"/>
<!-- scatter red dots -->
<path fill="#f00" d="M1165 370h3v3h-3zM1174 374h3v3h-3zM1166 385h3v3h-3zM1172 378h2v3h-2zM1164 394h3v3h-3zM1171 388h3v3h-3zM1171 396h3v3h-3zM1166 402h3v3h-3zM1171 405h3v3h-3zM1165 412h3v3h-3zM1151 397h3v3h-3zM1144 405h3v3h-3zM1151 405h3v3h-3zM1140 473h3v3h-3zM1137 479h3v3h-3zM1143 479h3v3h-3zM1139 484h3v3h-3zM1137 490h3v3h-3zM1142 491h3v3h-3zM1147 490h3v3h-3zM1142 507h3v3h-3zM1142 513h3v3h-3zM1149 509h3v3h-3zM1155 525h3v3h-3zM1152 587h3v3h-3zM1151 594h3v3h-3zM1157 594h3v3h-3zM1163 594h3v3h-3zM1194 606h4v4h-4zM1200 606h4v4h-4zM1184 595h3v3h-3zM1197 598h3v3h-3zM1202 572h3v3h-3zM1202 585h3v3h-3zM1202 589h3v3h-3zM1173 603h3v3h-3zM911 449h0M1001 480h0"/>
<!-- ovals -->
<g fill="#999" stroke="#f33" stroke-width="1.400">
<rect x="1165.500" y="317.500" width="7.500" height="5" rx="2.500"/><rect x="1165.500" y="355.500" width="7.500" height="5" rx="2.500"/><rect x="1174.500" y="373.500" width="8" height="5" rx="2.500"/><rect x="1174.500" y="416.500" width="8" height="5" rx="2.500"/><rect x="1165.500" y="433.500" width="7.500" height="5" rx="2.500"/><rect x="1165.500" y="471.500" width="7.500" height="5" rx="2.500"/><rect x="1165.500" y="487.500" width="7.500" height="5" rx="2.500"/><rect x="1165.500" y="525.500" width="7.500" height="5" rx="2.500"/>
<rect x="1179" y="280" width="6" height="4" rx="2"/><rect x="1198" y="280" width="6" height="4" rx="2"/><rect x="1179" y="307" width="6" height="4" rx="2"/><rect x="1198" y="307" width="6" height="4" rx="2"/>
<rect x="1187" y="314" width="10" height="4.500" rx="2.200"/><rect x="1187" y="360.500" width="10" height="4.500" rx="2.200"/><rect x="1194.500" y="367.500" width="8" height="5" rx="2.500"/><rect x="1194.500" y="422.500" width="8" height="5" rx="2.500"/><rect x="1187" y="430" width="10" height="4.500" rx="2.200"/><rect x="1187" y="476.500" width="10" height="4.500" rx="2.200"/><rect x="1187" y="483" width="10" height="4.500" rx="2.200"/><rect x="1187" y="530" width="10" height="4.500" rx="2.200"/>
<rect x="1158" y="538" width="6" height="4" rx="2"/><rect x="1183" y="538" width="6" height="4" rx="2"/><rect x="1158" y="611.500" width="6" height="4" rx="2"/><rect x="1183" y="611" width="6" height="4" rx="2"/>
<rect x="1179" y="616.500" width="6" height="3.500" rx="1.700"/><rect x="1191" y="616.500" width="6" height="3.500" rx="1.700"/><rect x="1200" y="616.500" width="6" height="3.500" rx="1.700"/><rect x="1178" y="642.500" width="6" height="3.500" rx="1.700"/><rect x="1189" y="642.500" width="6" height="3.500" rx="1.700"/><rect x="1196" y="642.500" width="6" height="3.500" rx="1.700"/>
<circle cx="1166" cy="328" r="1.400"/><circle cx="1170.700" cy="326" r="1.400"/><circle cx="1166" cy="337" r="1.400"/><circle cx="1170.700" cy="333" r="1.400"/><circle cx="1166" cy="343" r="1.400"/><circle cx="1170.700" cy="339" r="1.400"/><circle cx="1166" cy="350" r="1.400"/><circle cx="1170.700" cy="345" r="1.400"/>
<circle cx="1166" cy="445" r="1.400"/><circle cx="1166" cy="453" r="1.400"/><circle cx="1166" cy="458" r="1.400"/><circle cx="1166" cy="466" r="1.400"/><circle cx="1166" cy="499" r="1.400"/><circle cx="1166" cy="506" r="1.400"/><circle cx="1166" cy="512" r="1.400"/><circle cx="1166" cy="519" r="1.400"/>
<circle cx="1170.500" cy="295" r="2"/>
</g>
<!-- holes -->
<g>
<circle cx="769.300" cy="276.700" r="8.800" fill="#a89585"/><circle cx="769.300" cy="276.700" r="4.300" fill="#aaa"/>
<circle cx="923.300" cy="276.700" r="8.800" fill="#a89585"/><circle cx="923.300" cy="276.700" r="4.300" fill="#aaa"/>
<circle cx="1196.700" cy="273" r="7.500" fill="#a89585"/><circle cx="1196.700" cy="273" r="3.500" fill="#aaa"/>
<circle cx="1162.700" cy="424" r="12" fill="#a89585"/><circle cx="1162.700" cy="424" r="5" fill="#aaa"/>
<circle cx="735.300" cy="520.700" r="8.800" fill="#a89585"/><circle cx="735.300" cy="520.700" r="4.300" fill="#aaa"/>
<circle cx="850" cy="583.700" r="8.800" fill="#a89585"/><circle cx="850" cy="583.700" r="4.300" fill="#aaa"/>
<circle cx="1130" cy="573" r="8.800" fill="#a89585"/><circle cx="1130" cy="573" r="4.300" fill="#aaa"/>
<circle cx="1180.700" cy="658" r="8.800" fill="#a89585"/><circle cx="1180.700" cy="658" r="4.300" fill="#aaa"/>
<circle cx="837.700" cy="458" r="7.800" fill="#aaa" stroke="#f00" stroke-width="2.600"/>
<circle cx="1067.300" cy="425.700" r="7.800" fill="#aaa" stroke="#f00" stroke-width="2.600"/>
<circle cx="1067.300" cy="490" r="7.800" fill="#aaa" stroke="#f00" stroke-width="2.600"/>
<circle cx="678.300" cy="279.700" r="6" fill="#b0b0b0"/><circle cx="1252.700" cy="280" r="6" fill="#b0b0b0"/>
<circle cx="942.300" cy="268.700" r="2.600" fill="#b0b0b0"/><circle cx="1127.700" cy="657" r="2.500" fill="#aaa"/><circle cx="1200" cy="661" r="2.500" fill="#aaa"/>
<circle cx="678.300" cy="302" r="1.400" fill="#aaa"/><circle cx="1252.700" cy="302" r="1.400" fill="#a89585"/><circle cx="747.700" cy="272.700" r="1.400" fill="#aaa"/><circle cx="874.500" cy="320.500" r="2.200" fill="#b09ca0"/><circle cx="1073" cy="320.500" r="1.800" fill="#b5a697"/><circle cx="736.500" cy="388" r="2.400" fill="#aaa"/><circle cx="736.500" cy="500" r="2.400" fill="#aaa"/><circle cx="807" cy="508.500" r="1.400" fill="#a89585"/><circle cx="1135.500" cy="624" r="1.400" fill="#a89585"/><circle cx="1153" cy="612" r="1.800" fill="#b09ca0"/><circle cx="1178.700" cy="272" r="1.400" fill="#a89585"/>
</g>
</svg>

<!-- status -->
<div class="a" style="left:0;top:838px;width:1523px;height:20px;background:#0091d9;color:#fff;font-family:'Liberation Mono',monospace;font-size:15px;line-height:23px;text-align:center;overflow:hidden">XZZ Schematics https://www.xzztools.com</div>
</body></html>
